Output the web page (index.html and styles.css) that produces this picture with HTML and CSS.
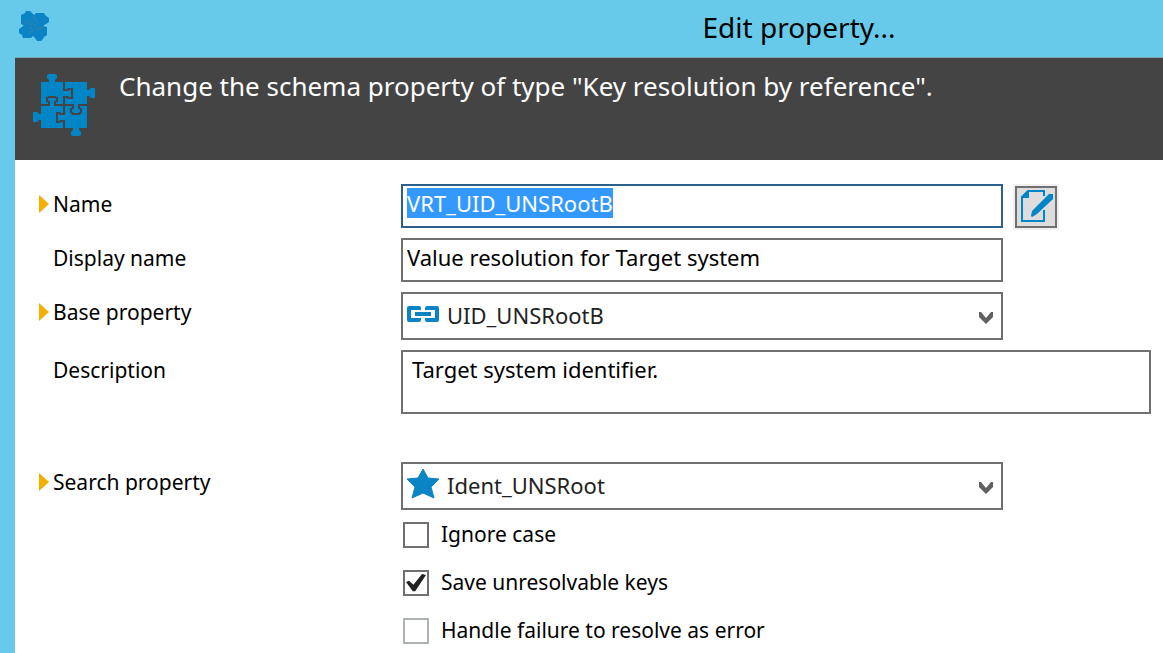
FILE: index.html
```html
<!DOCTYPE html>
<html lang="en">
<head>
    <meta charset="UTF-8">
    <meta name="viewport" content="width=device-width, initial-scale=1.0">
    <title>Edit property...</title>
    <link rel="stylesheet" href="styles.css">
</head>
<body>
    <div class="window">
        <div class="titlebar">
            <svg class="app-icon" viewBox="0 0 30 30" aria-hidden="true">
                <path fill="#0a84c4" d="M2 4l4-2 1-2h4l2 2 2 2 2-2h8l2 3 3 2v4l-3 2-3 2 4 1v8l-3 2-1 2-2 2h-4l-2-3-2-2-2 2H4l-1-3-3-2v-4l3-2 2-2-3-1z"/>
                <path fill="none" stroke="#3f7f9f" d="M3 14l5-4 4 4 3-2M14 4l1 4 4 3-4 4 4 4 6-4M10 16l4 3-4 4"/>
            </svg>
            <span class="title">Edit property...</span>
        </div>
        <header class="banner">
            <svg class="banner-icon" viewBox="0 0 62 62" aria-hidden="true">
                <path fill="#0085c7" d="M8 8h8V6l-2-2V1l2-1h6l2 1v3l-2 2v2h32v8h2l2-2h4v10h-4l-2-2h-2v32H46v2l2 2v3l-2 1h-6l-2-1v-3l2-2v-2H8v-8H6l-2 2H0V38h4l2 2h2z"/>
                <path fill="none" stroke="#444" stroke-width="2" d="M31 8v8h3l2-1h3v9h-3l-2-1h-3v17h-3l-2-1h-2v9h2l2-1h3v7M8 31h8v-3l-2-1v-3l2-1h6l2 1v3l-2 1v3h18v3l-2 1v3l2 2h6l2-2v-3l-2-1v-3h8"/>
            </svg>
            <h1>Change the schema property of type "Key resolution by reference".</h1>
        </header>
        <main>
            <form class="form">
                <label class="label required" for="name">Name</label>
                <input class="field focused" id="name" type="text" value="VRT_UID_UNSRootB" autofocus>
                <button class="edit-button" type="button" aria-label="Edit name">
                    <svg viewBox="0 0 38 38" aria-hidden="true">
                        <path fill="none" stroke="#0085c7" stroke-width="2" d="M27 8V3H11L5 9v24h22V22"/>
                        <path fill="#0085c7" d="M4 10l8-8v8z"/>
                        <path fill="#0085c7" d="M32 6h4v5L20 26l-5 3-1-1 1-5z"/>
                    </svg>
                </button>

                <label class="label" for="display-name">Display name</label>
                <input class="field" id="display-name" type="text" value="Value resolution for Target system">

                <label class="label required" for="base">Base property</label>
                <div class="combo">
                    <svg class="combo-icon" viewBox="0 0 32 32" aria-hidden="true">
                        <path fill="none" stroke="#0a84c4" stroke-width="4" stroke-linejoin="round" d="M2 10h10v12H2zM20 10h10v12H20z"/>
                        <path fill="none" stroke="#fff" stroke-width="8" d="M10 16h12"/>
                        <path fill="none" stroke="#0a84c4" stroke-width="4" d="M8 16h16"/>
                    </svg>
                    <select id="base"><option>UID_UNSRootB</option></select>
                    <svg class="arrow" viewBox="0 0 14 12" aria-hidden="true"><path fill="#606060" d="M0 0h2l5 6 5-6h2v5l-7 7-7-7z"/></svg>
                </div>

                <label class="label" for="description">Description</label>
                <textarea class="field description" id="description">Target system identifier.</textarea>

                <label class="label required search" for="search">Search property</label>
                <div class="combo search">
                    <svg class="combo-icon" viewBox="0 0 32 32" aria-hidden="true">
                        <path fill="#0a84c4" stroke="#0a84c4" stroke-linejoin="round" d="M16 1l5 9 11 1-8 8 3 11-11-5-11 5 3-11-8-8 11-1z"/>
                    </svg>
                    <select id="search"><option>Ident_UNSRoot</option></select>
                    <svg class="arrow" viewBox="0 0 14 12" aria-hidden="true"><path fill="#606060" d="M0 0h2l5 6 5-6h2v5l-7 7-7-7z"/></svg>
                </div>

                <div class="options">
                    <label class="option"><input type="checkbox">Ignore case</label>
                    <label class="option"><input type="checkbox" checked>Save unresolvable keys</label>
                    <label class="option"><input type="checkbox" disabled>Handle failure to resolve as error</label>
                </div>
            </form>
        </main>
    </div>
    <script>
        var nameField = document.getElementById('name');
        nameField.focus();
        nameField.select();
    </script>
</body>
</html>
```
FILE: styles.css
```css
* {
    box-sizing: border-box;
}
body {
    margin: 0;
    font-family: "Noto Sans", "Open Sans", sans-serif;
    font-size: 21px;
    color: #000;
    background-color: #67caea;
    overflow: hidden;
}
.window {
    padding-left: 15px;
}
.titlebar {
    display: flex;
    align-items: center;
    height: 58px;
    padding: 0 0 4px 4px;
    border-bottom: 1px solid #79a5b5;
}
.app-icon {
    width: 30px;
    height: 30px;
    margin-bottom: 2px;
}
.title {
    flex: 1;
    padding-left: 386px;
    text-align: center;
    font-size: 28px;
}
.banner {
    display: flex;
    gap: 24px;
    height: 102px;
    padding: 10px 18px;
    background-color: #444;
    color: #fff;
}
.banner-icon {
    flex: none;
    width: 62px;
    height: 62px;
    margin-top: 6px;
}
.banner h1 {
    margin: 0;
    font-size: 26px;
    font-weight: normal;
    line-height: 36px;
}
main {
    min-height: calc(100vh - 160px);
    padding: 24px 12px 0 23px;
    background-color: #fff;
}
.form {
    display: grid;
    grid-template-columns: 363px 1fr 148px;
    row-gap: 10px;
    align-items: start;
}
.label {
    grid-column: 1;
    padding-left: 15px;
    line-height: 40px;
}
.required {
    display: flex;
    align-items: center;
    gap: 4px;
    padding-left: 1px;
}
.required::before {
    content: "";
    border: solid transparent;
    border-width: 9px 0 9px 10px;
    border-left-color: #f4b000;
}
.field,
.combo {
    grid-column: 2;
    width: 100%;
    height: 44px;
    border: 2px solid #707070;
    background-color: #fff;
}
.field {
    padding: 0 4px 6px;
    font: inherit;
    font-size: 22px;
    color: inherit;
    outline: none;
}
.focused {
    border-color: #2b5f8c;
}
.field::selection {
    background-color: #3399ff;
    color: #fff;
}
.edit-button {
    width: 42px;
    height: 42px;
    margin: 2px 0 0 12px;
    padding: 0;
    border: 2px solid #707070;
    background-color: #ddd;
    outline: 2px solid #f0f0f0;
}
.edit-button svg {
    display: block;
    width: 38px;
    height: 38px;
}
.combo {
    display: flex;
    align-items: center;
    gap: 8px;
    height: 48px;
    padding: 0 8px 0 4px;
}
.combo-icon {
    flex: none;
    width: 32px;
    height: 32px;
    margin-bottom: 4px;
}
.combo select {
    flex: 1;
    height: 44px;
    padding: 0 0 2px;
    border: 0;
    background: none;
    appearance: none;
    font: inherit;
    font-size: 22px;
    color: #222;
    outline: none;
}
.arrow {
    width: 14px;
    height: 12px;
    margin-top: 4px;
}
.description {
    grid-column: 2 / 4;
    height: 64px;
    padding: 2px 9px;
    resize: none;
    overflow: hidden;
}
.search {
    margin-top: 38px;
}
.options {
    grid-column: 2 / 4;
    margin-top: -10px;
}
.option {
    display: flex;
    align-items: center;
    gap: 12px;
    height: 48px;
    padding-left: 2px;
}
.option input {
    display: grid;
    place-items: center;
    width: 26px;
    height: 26px;
    margin: 2px 0 0;
    border: 2px solid #707070;
    background-color: #fff;
    appearance: none;
}
.option input:checked::before {
    content: "";
    width: 20px;
    height: 18px;
    background-color: #222;
    clip-path: polygon(0 45%, 15% 38%, 37% 60%, 80% 0, 100% 5%, 46% 96%, 34% 96%);
}
.option input:disabled {
    border-color: #adb2b5;
}
```
